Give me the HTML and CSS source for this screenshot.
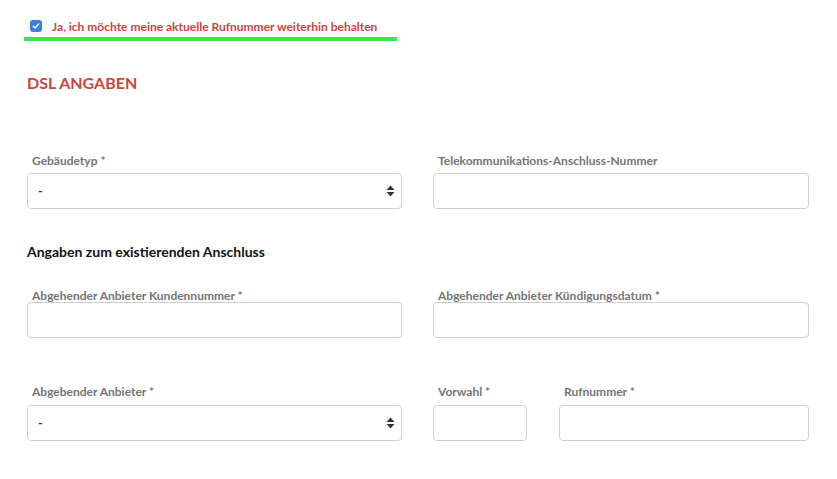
FILE: index.html
```html
<!DOCTYPE html>
<html lang="de">
<head>
    <meta charset="UTF-8">
    <meta name="viewport" content="width=device-width, initial-scale=1.0">
    <title>DSL Angaben</title>
    <link rel="stylesheet" href="styles.css">
</head>
<body>
    <div class="keep">
        <span class="checkbox">
            <svg width="8" height="8" viewBox="0 0 8 8"><path d="M1.3 4.2 L3.1 6 L6.7 1.9" fill="none" stroke="#fff" stroke-width="1.4" stroke-linecap="round" stroke-linejoin="round"/></svg>
        </span>
        <span class="keep-text">Ja, ich möchte meine aktuelle Rufnummer weiterhin behalten</span>
    </div>
    <div class="highlight"></div>

    <h2 class="section-title">DSL ANGABEN</h2>

    <div class="row row-first">
        <div class="field">
            <label>Gebäudetyp *</label>
            <div class="select">
                <span>-</span>
                <svg width="9" height="12" viewBox="0 0 9 12"><path d="M4.5 0.5 L8.5 5 L0.5 5 Z M0.5 7 L8.5 7 L4.5 11.5 Z" fill="#333"/></svg>
            </div>
        </div>
        <div class="field">
            <label>Telekommunikations-Anschluss-Nummer</label>
            <div class="input"></div>
        </div>
    </div>

    <h3 class="sub-title">Angaben zum existierenden Anschluss</h3>

    <div class="row row-second">
        <div class="field">
            <label>Abgehender Anbieter Kundennummer *</label>
            <div class="input"></div>
        </div>
        <div class="field">
            <label>Abgehender Anbieter Kündigungsdatum *</label>
            <div class="input"></div>
        </div>
    </div>

    <div class="row row-third">
        <div class="field">
            <label>Abgebender Anbieter *</label>
            <div class="select">
                <span>-</span>
                <svg width="9" height="12" viewBox="0 0 9 12"><path d="M4.5 0.5 L8.5 5 L0.5 5 Z M0.5 7 L8.5 7 L4.5 11.5 Z" fill="#333"/></svg>
            </div>
        </div>
        <div class="phone">
            <div class="field">
                <label>Vorwahl *</label>
                <div class="input"></div>
            </div>
            <div class="field">
                <label>Rufnummer *</label>
                <div class="input"></div>
            </div>
        </div>
    </div>
</body>
</html>
```

FILE: styles.css
```css
* {
    box-sizing: border-box;
    margin: 0;
    padding: 0;
}
body {
    font-family: Lato, 'Open Sans', sans-serif;
    background: #fff;
    color: #111;
    padding: 0 0 0 27px;
    width: 837px;
}
.keep {
    display: flex;
    align-items: center;
    gap: 10px;
    padding: 19px 0 0 3px;
    height: 33px;
}
.checkbox {
    width: 12px;
    height: 12px;
    border-radius: 3px;
    background: #3a7ddf;
    display: flex;
    align-items: center;
    justify-content: center;
}
.keep-text {
    font-size: 12px;
    font-weight: 700;
    color: #c9463d;
}
.highlight {
    margin: 4px 0 0 -3px;
    width: 373px;
    height: 4px;
    background: #33e84b;
}
.section-title {
    font-size: 16px;
    font-weight: 700;
    color: #c9463d;
    margin-top: 31px;
    line-height: 22px;
}
.row {
    display: grid;
    grid-template-columns: 375px 376px;
    gap: 31px;
}
.row-first {
    margin-top: 60px;
}
.row-second {
    margin-top: 28px;
}
.row-third {
    margin-top: 47px;
}
.field label {
    display: block;
    font-size: 12px;
    font-weight: 700;
    color: #747474;
    padding-left: 5px;
    line-height: 14px;
    margin-bottom: 6px;
}
.row-first .field label {
    margin-bottom: 5px;
}
.row-second .field label {
    margin-bottom: -1px;
}
.input,
.select {
    height: 36px;
    border: 1px solid #cfcfcf;
    border-radius: 4px;
    background: #fff;
}
.select {
    display: flex;
    align-items: center;
    justify-content: space-between;
    padding: 0 6px 0 10px;
    font-size: 13px;
    font-weight: 700;
    color: #333;
}
.sub-title {
    font-size: 14px;
    font-weight: 700;
    color: #111;
    margin-top: 34px;
    line-height: 18px;
}
.phone {
    display: grid;
    grid-template-columns: 94px 250px;
    gap: 32px;
}
```
